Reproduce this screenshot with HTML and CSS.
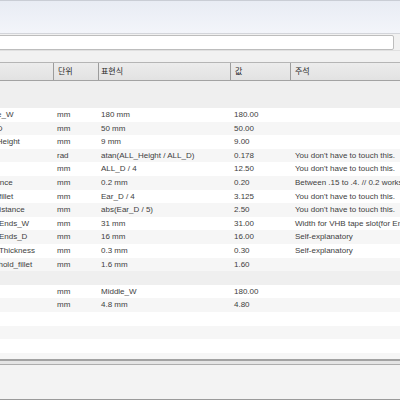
FILE: index.html
```html
<!DOCTYPE html>
<html lang="ko">

<head>
  <meta charset="UTF-8">
  <meta name="viewport" content="width=device-width, initial-scale=1.0">
  <title>매개변수</title>
  <link rel="stylesheet" href="styles.css">
</head>

<body>
  <div class="toolbar"></div>
  <div class="search"><input class="search__input" type="text"></div>
  <div class="filterbar"></div>

  <div class="params">
    <div class="row row--head">
      <div class="cell cell--name">이름</div>
      <div class="cell">단위</div>
      <div class="cell">표현식</div>
      <div class="cell">값</div>
      <div class="cell">주석</div>
    </div>
    <div class="group group--top"></div>

    <div class="row">
      <div class="cell cell--name">Middle_W</div>
      <div class="cell">mm</div>
      <div class="cell">180 mm</div>
      <div class="cell">180.00</div>
      <div class="cell"></div>
    </div>
    <div class="row">
      <div class="cell cell--name">ALL_D</div>
      <div class="cell">mm</div>
      <div class="cell">50 mm</div>
      <div class="cell">50.00</div>
      <div class="cell"></div>
    </div>
    <div class="row">
      <div class="cell cell--name">ALL_Height</div>
      <div class="cell">mm</div>
      <div class="cell">9 mm</div>
      <div class="cell">9.00</div>
      <div class="cell"></div>
    </div>
    <div class="row">
      <div class="cell cell--name">Slope</div>
      <div class="cell">rad</div>
      <div class="cell">atan(ALL_Height / ALL_D)</div>
      <div class="cell">0.178</div>
      <div class="cell">You don't have to touch this.</div>
    </div>
    <div class="row">
      <div class="cell cell--name">EarD</div>
      <div class="cell">mm</div>
      <div class="cell">ALL_D / 4</div>
      <div class="cell">12.50</div>
      <div class="cell">You don't have to touch this.</div>
    </div>
    <div class="row">
      <div class="cell cell--name">Tolerance</div>
      <div class="cell">mm</div>
      <div class="cell">0.2 mm</div>
      <div class="cell">0.20</div>
      <div class="cell">Between .15 to .4. // 0.2 works fine for me</div>
    </div>
    <div class="row">
      <div class="cell cell--name">Hole_fillet</div>
      <div class="cell">mm</div>
      <div class="cell">Ear_D / 4</div>
      <div class="cell">3.125</div>
      <div class="cell">You don't have to touch this.</div>
    </div>
    <div class="row">
      <div class="cell cell--name">Ear_distance</div>
      <div class="cell">mm</div>
      <div class="cell">abs(Ear_D / 5)</div>
      <div class="cell">2.50</div>
      <div class="cell">You don't have to touch this.</div>
    </div>
    <div class="row">
      <div class="cell cell--name">VHB_Ends_W</div>
      <div class="cell">mm</div>
      <div class="cell">31 mm</div>
      <div class="cell">31.00</div>
      <div class="cell">Width for VHB tape slot(for Ends)</div>
    </div>
    <div class="row">
      <div class="cell cell--name">VHB_Ends_D</div>
      <div class="cell">mm</div>
      <div class="cell">16 mm</div>
      <div class="cell">16.00</div>
      <div class="cell">Self-explanatory</div>
    </div>
    <div class="row">
      <div class="cell cell--name">VHB_Thickness</div>
      <div class="cell">mm</div>
      <div class="cell">0.3 mm</div>
      <div class="cell">0.30</div>
      <div class="cell">Self-explanatory</div>
    </div>
    <div class="row">
      <div class="cell cell--name">Threshold_fillet</div>
      <div class="cell">mm</div>
      <div class="cell">1.6 mm</div>
      <div class="cell">1.60</div>
      <div class="cell"></div>
    </div>

    <div class="group"></div>

    <div class="row">
      <div class="cell cell--name">Width</div>
      <div class="cell">mm</div>
      <div class="cell">Middle_W</div>
      <div class="cell">180.00</div>
      <div class="cell"></div>
    </div>
    <div class="row">
      <div class="cell cell--name">Pitch</div>
      <div class="cell">mm</div>
      <div class="cell">4.8 mm</div>
      <div class="cell">4.80</div>
      <div class="cell"></div>
    </div>
    <div class="row"></div>
    <div class="row"></div>
    <div class="row"></div>
    <div class="row"></div>
  </div>

  <div class="splitter"></div>
  <div class="panel"></div>
</body>

</html>
```

FILE: styles.css
```css
body {
  margin: 0;
  height: 400px;
  overflow: hidden;
  background: #f1f1f1;
  font-family: "Liberation Sans", "Noto Sans CJK KR", sans-serif;
  font-size: 8px;
  color: #3e3e3e;
}

.toolbar {
  height: 32px;
  border-top: 1px solid #c9cdd5;
  border-bottom: 1px solid #d3d5da;
  background: linear-gradient(#e8ecf4, #f3f5fa);
}

.search {
  padding-top: 1px;
  background: #f1f1f1;
}

.search__input {
  display: block;
  box-sizing: border-box;
  margin: 0 0 0 -6px;
  width: 400px;
  height: 15px;
  border: 1px solid #bdbdbd;
  border-radius: 2px;
  background: #fff;
  outline: none;
}

.filterbar {
  height: 11px;
  border-top: 1px solid #e0e0e0;
  background: #f1f1f1;
}

.params {
  height: 297px;
  overflow: hidden;
  margin-left: -70px;
  background: #fff;
}

.row {
  display: grid;
  grid-template-columns: 124px 45px 132px 60px 1fr;
  height: 13.6px;
  line-height: 13.6px;
  background: #fff;
}

/* banding restarts after each group */
.row:nth-child(even) {
  background: #f6f6f6;
}

.group ~ .group ~ .row:nth-child(even) {
  background: #fff;
}

.group ~ .group ~ .row:nth-child(odd) {
  background: #f6f6f6;
}

.cell {
  padding-left: 3px;
  white-space: nowrap;
  overflow: hidden;
}

.cell:nth-child(3) {
  padding-left: 2px;
}

.cell:nth-child(5) {
  padding-left: 4px;
}

.cell--name {
  padding-left: 48px;
}

.row--head {
  height: 17px;
  line-height: 17px;
  border-top: 1px solid #b5b5b5;
  border-bottom: 1px solid #a3a3a3;
  background: linear-gradient(#ececec, #e2e2e2);
  color: #2a2a2a;
}

.row--head .cell {
  border-right: 1px solid #9c9c9c;
  padding-left: 4px;
}

.row--head .cell:nth-child(3) {
  padding-left: 2px;
}

.row--head .cell:last-child {
  border-right: none;
}

.group {
  height: 27px;
  background: #efefef;
}

.group:not(.group--top) {
  height: 13.6px;
}

.splitter {
  height: 3px;
  border-top: 2px solid #a2a2a2;
  border-bottom: 1px solid #adadad;
  background: #e4e4e4;
}

.panel {
  height: 34px;
  border-bottom: 1px solid #9a9a9a;
  background: #f3f3f3;
}
```
